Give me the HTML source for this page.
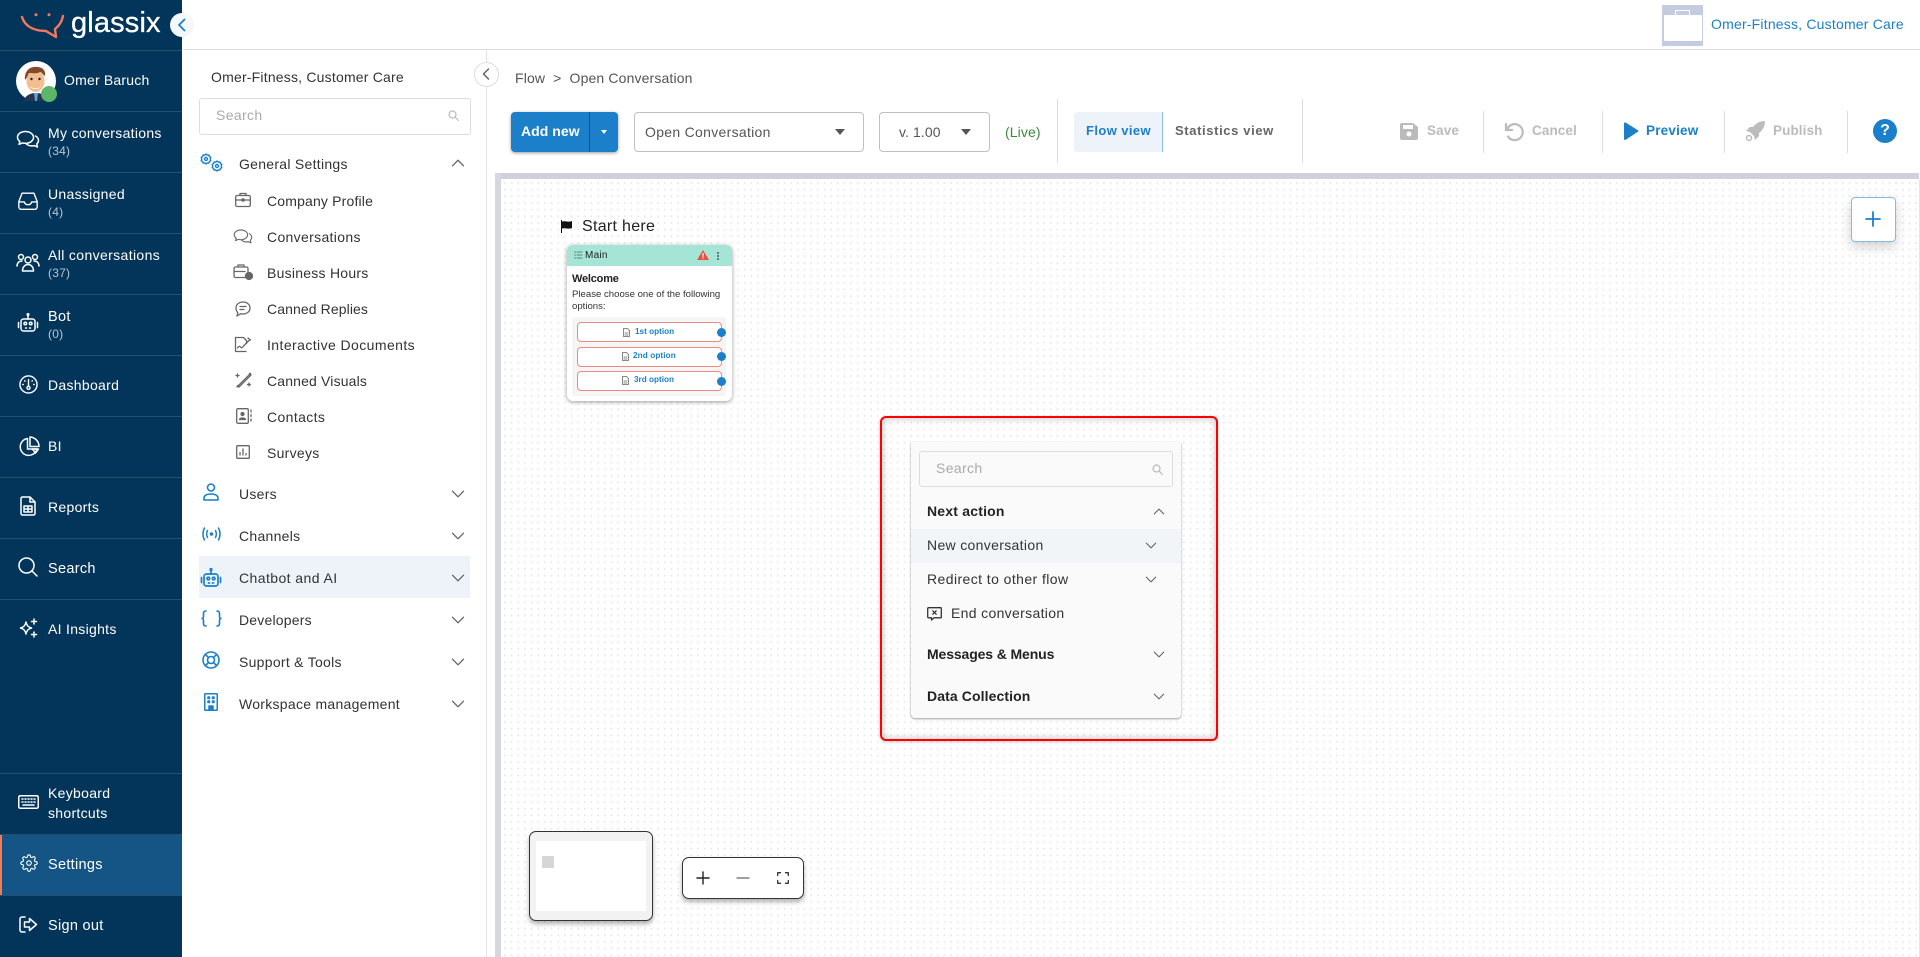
<!DOCTYPE html>
<html><head><meta charset="utf-8"><title>Flow</title>
<style>
html,body{margin:0;padding:0;background:#fff}
body{width:1920px;height:957px;position:relative;overflow:hidden;font-family:"Liberation Sans",sans-serif;color:#333}
.a,.t,svg.i,.c{position:absolute}
.t{white-space:nowrap;line-height:20px;font-size:14px;letter-spacing:.25px}
svg.i{fill:none;stroke:currentColor;stroke-width:1.5;stroke-linecap:round;stroke-linejoin:round;overflow:visible}
.w{color:#fff}
.n{color:#fff;font-size:14px;letter-spacing:.3px}
.cnt{color:#b9c6d1;font-size:12px;letter-spacing:.2px}
.hr{position:absolute;left:0;width:182px;height:1px;background:#24506f}
.s{font-size:14px;letter-spacing:.28px;color:#333}
.ic{color:#666}
.bl{color:#1b7fc9}
.v{position:absolute;width:1px;background:#ddd}
.ch{position:absolute;fill:none;stroke:#666;stroke-width:1.3;stroke-linecap:round;stroke-linejoin:round}
</style></head><body>

<svg width="0" height="0" style="position:absolute">
<symbol id="chat" viewBox="0 0 24 24"><path d="M9.500 3.500C5 3.500 1.500 6 1.500 9.300c0 1.700 1 3.200 2.400 4.300L3 16.300l3.600-1.400c.9.300 1.900.4 2.900.4 4.400 0 8-2.600 8-5.900s-3.600-5.900-8-5.900z"/><path d="M19.500 8c1.800 1 3 2.600 3 4.400 0 1.400-.7 2.600-1.700 3.500l.7 3.100-3.300-1.400c-.8.200-1.700.3-2.500.3-2.300 0-4.200-.8-5.400-2"/></symbol>
<symbol id="dn" viewBox="0 0 14 8"><path d="M1.500 1.200L7 6.800l5.500-5.600"/></symbol>
<symbol id="up" viewBox="0 0 14 8"><path d="M1.500 6.800L7 1.200l5.500 5.600"/></symbol>
<symbol id="bot" viewBox="0 0 24 24"><rect x="5" y="8" width="14" height="12" rx="2.500"/><path d="M12 8V4.500M2.500 11.500v5M21.500 11.500v5M9.500 17h1M13.500 17h1"/><circle cx="12" cy="3.500" r=".8"/><circle cx="9.300" cy="12.500" r="1.300"/><circle cx="14.700" cy="12.500" r="1.300"/></symbol>
</svg>

<!-- Left nav -->
<div class="a" style="left:0;top:0;width:182px;height:957px;background:#03355a"></div>
<div class="hr" style="top:50px"></div><div class="hr" style="top:111px"></div><div class="hr" style="top:172px"></div><div class="hr" style="top:233px"></div><div class="hr" style="top:294px"></div><div class="hr" style="top:355px"></div><div class="hr" style="top:416px"></div><div class="hr" style="top:477px"></div><div class="hr" style="top:538px"></div><div class="hr" style="top:599px"></div><div class="hr" style="top:773px"></div><div class="hr" style="top:834px"></div><div class="hr" style="top:895px"></div>
<div class="a" style="left:0;top:835px;width:182px;height:60px;background:#145586"></div>
<div class="a" style="left:0;top:835px;width:2px;height:60px;background:#f47b5a"></div>

<!-- logo -->
<svg class="a" style="left:0;top:0" width="70" height="45" viewBox="0 0 70 45"><path d="M22 17C25 27 35 31 46 31L56 37 55 29C59 26 62 21 63 16" fill="none" stroke="#f27a5b" stroke-width="2.400" stroke-linecap="round" stroke-linejoin="round"/><circle cx="36" cy="14.700" r="1.500" fill="#f27a5b"/><circle cx="49" cy="14.700" r="1.500" fill="#f27a5b"/></svg>
<div class="t" style="left:71px;top:5px;font-size:29px;line-height:36px;color:#fff;letter-spacing:.15px;-webkit-text-stroke:.3px #fff">glassix</div>
<div class="a" style="left:170px;top:13px;width:24px;height:24px;border-radius:50%;background:#f4f8fb"></div>
<svg class="i" style="left:177px;top:18px;color:#1b7fc9;stroke-width:1.800" width="10" height="14" viewBox="0 0 10 14"><path d="M7.500 1.500L2 7l5.500 5.500"/></svg>

<!-- avatar -->
<div class="a" style="left:16px;top:61px;width:40px;height:40px;border-radius:50%;background:#fff"></div>
<svg class="a" style="left:16px;top:61px" width="40" height="40" viewBox="0 0 40 40"><path d="M8 40c1-6 7-8 12-8s11 2 12 8z" fill="#27344f"/><path d="M18 32h4l-1 8h-2z" fill="#5ba6d9"/><ellipse cx="19.500" cy="20" rx="9" ry="11" fill="#f2bd90"/><path d="M9 19c-1-9 5-14 12-13 5 0 9 3 8 9-3-2-3-4-5-4-3 2-8 1-11 1-1 2-2 5-4 7z" fill="#84492a"/><path d="M14 25c2 3 9 3 11 0-1 4-10 4-11 0z" fill="#fff"/><circle cx="15.500" cy="18" r="1.200" fill="#222"/><circle cx="23.500" cy="18" r="1.200" fill="#222"/></svg>
<div class="a" style="left:41px;top:86px;width:16px;height:16px;border-radius:50%;background:#5cb868"></div>
<div class="t n" style="left:64px;top:70px;letter-spacing:.2px">Omer Baruch</div>

<!-- nav items -->
<svg class="i w" style="left:16px;top:128px" width="24" height="24"><use href="#chat"/></svg>
<div class="t n" style="left:48px;top:123px">My conversations</div><div class="t cnt" style="left:48px;top:141px">(34)</div>
<svg class="i w" style="left:17px;top:190px" width="22" height="22" viewBox="0 0 24 24"><path d="M5.500 3.500h13l3.500 9v6a2.500 2.500 0 0 1-2.500 2.500h-15A2.500 2.500 0 0 1 2 18.500v-6z"/><path d="M2.500 13H8c.5 2 2 3 4 3s3.500-1 4-3h5.500"/></svg>
<div class="t n" style="left:48px;top:184px">Unassigned</div><div class="t cnt" style="left:48px;top:202px">(4)</div>
<svg class="i w" style="left:16px;top:252px" width="24" height="22" viewBox="0 0 24 22"><circle cx="5" cy="5" r="2.500"/><circle cx="19" cy="5" r="2.500"/><circle cx="12" cy="8" r="3"/><path d="M1 14c0-3 2-5 5-5M23 14c0-3-2-5-5-5M6.500 19c0-4 2.500-6.500 5.500-6.500s5.500 2.500 5.500 6.500z"/></svg>
<div class="t n" style="left:48px;top:245px;letter-spacing:.37px">All conversations</div><div class="t cnt" style="left:48px;top:263px">(37)</div>
<svg class="i w" style="left:16px;top:311px" width="24" height="24"><use href="#bot"/></svg>
<div class="t n" style="left:48px;top:307px;font-size:14.500px">Bot</div><div class="t cnt" style="left:48px;top:324px">(0)</div>
<svg class="i w" style="left:18.500px;top:374.500px" width="19" height="19" viewBox="0 0 20 20"><circle cx="10" cy="10" r="9"/><circle cx="10" cy="13.500" r="1.600"/><path d="M10 11.500V5M4 10h.5M15.500 10h.5M6 6l.3.300M14 6l-.3.300"/></svg>
<div class="t n" style="left:48px;top:375px">Dashboard</div>
<svg class="i w" style="left:18.500px;top:436px" width="21" height="20" viewBox="0 0 21 20"><path d="M8.500 2.500a8.500 8.500 0 1 0 9.500 10.500h-9.500z"/><path d="M11 1v9.500h9A9.500 9.500 0 0 0 11 1zM13.500 13l3 4 3-4z"/></svg>
<div class="t n" style="left:48px;top:436px">BI</div>
<svg class="i w" style="left:20px;top:496px" width="16" height="20" viewBox="0 0 16 20"><path d="M1 2.500A1.500 1.500 0 0 1 2.500 1H10l5 5v11.500a1.500 1.500 0 0 1-1.500 1.500h-11A1.500 1.500 0 0 1 1 17.500z"/><path d="M10 1v5h5M4 10h8v6H4zM4 13h8M8 10v6"/></svg>
<div class="t n" style="left:48px;top:497px">Reports</div>
<svg class="i w" style="left:18px;top:557px" width="20" height="20" viewBox="0 0 20 20"><circle cx="8.500" cy="8.500" r="7.500"/><path d="M14 14l5 5"/></svg>
<div class="t n" style="left:48px;top:559px;font-size:14.500px">Search</div>
<svg class="i w" style="left:18px;top:618px" width="20" height="20" viewBox="0 0 20 20"><path d="M8 4c.8 3.500 2 5 5.500 6-3.500 1-4.700 2.500-5.500 6-.8-3.500-2-5-5.500-6C6 9 7.200 7.500 8 4zM16 1v5M13.500 3.500h5M16 14v5M13.500 16.500h5"/></svg>
<div class="t n" style="left:48px;top:619px">AI Insights</div>
<svg class="i w" style="left:18px;top:795px" width="21" height="14" viewBox="0 0 21 14"><rect x=".75" y=".75" width="19.500" height="12.500" rx="1.500"/><path d="M4 4h1M7 4h1M10 4h1M13 4h1M16 4h1M4 7h1M7 7h1M10 7h1M13 7h1M16 7h1M5 10h11"/></svg>
<div class="t n" style="left:48px;top:783px">Keyboard</div><div class="t n" style="left:48px;top:803px">shortcuts</div>
<svg class="i w" style="left:20px;top:854px" width="18" height="18" viewBox="0 0 24 24" stroke-width="2"><circle cx="12" cy="12" r="3"/><path d="M19.400 15a1.650 1.650 0 0 0 .33 1.820l.06.06a2 2 0 0 1 0 2.830 2 2 0 0 1-2.830 0l-.06-.06a1.650 1.650 0 0 0-1.820-.33 1.650 1.650 0 0 0-1 1.510V21a2 2 0 0 1-2 2 2 2 0 0 1-2-2v-.09A1.650 1.650 0 0 0 9 19.400a1.650 1.650 0 0 0-1.820.33l-.06.06a2 2 0 0 1-2.830 0 2 2 0 0 1 0-2.830l.06-.06a1.650 1.650 0 0 0 .33-1.820 1.650 1.650 0 0 0-1.510-1H3a2 2 0 0 1-2-2 2 2 0 0 1 2-2h.09A1.650 1.650 0 0 0 4.600 9a1.650 1.650 0 0 0-.33-1.820l-.06-.06a2 2 0 0 1 0-2.830 2 2 0 0 1 2.830 0l.06.06a1.650 1.650 0 0 0 1.820.33H9a1.650 1.650 0 0 0 1-1.510V3a2 2 0 0 1 2-2 2 2 0 0 1 2 2v.09a1.650 1.650 0 0 0 1 1.510 1.650 1.650 0 0 0 1.820-.33l.06-.06a2 2 0 0 1 2.830 0 2 2 0 0 1 0 2.830l-.06.06a1.650 1.650 0 0 0-.33 1.820V9a1.650 1.650 0 0 0 1.510 1H21a2 2 0 0 1 2 2 2 2 0 0 1-2 2h-.09a1.650 1.650 0 0 0-1.510 1z"/></svg>
<div class="t n" style="left:48px;top:855px;font-size:14.500px">Settings</div>
<svg class="i w" style="left:19px;top:916px" width="19" height="17" viewBox="0 0 19 17"><path d="M6 1H3a2 2 0 0 0-2 2v11a2 2 0 0 0 2 2h3"/><path d="M5.500 6h5V2.500l7 6-7 6V11h-5z"/></svg>
<div class="t n" style="left:48px;top:916px;font-size:14.500px">Sign out</div>

<!-- top header -->
<div class="a" style="left:183px;top:49px;width:1737px;height:1px;background:#ddd"></div>
<div class="a" style="left:1662px;top:5px;width:41px;height:41px;background:#c5cce2"></div>
<div class="a" style="left:1664px;top:15px;width:38px;height:26px;background:#fff;border-radius:1px"></div>
<div class="a" style="left:1675px;top:10px;width:15px;height:5px;border:1.500px solid #fff;border-bottom:0;box-sizing:border-box"></div>
<div class="t bl" style="left:1711px;top:14px;letter-spacing:.2px">Omer-Fitness, Customer Care</div>

<!-- settings panel -->
<div class="a" style="left:486px;top:50px;width:1px;height:907px;background:#e4e4e4"></div>
<div class="a" style="left:474px;top:62px;width:23px;height:23px;border-radius:50%;background:#fff;border:1px solid #ddd"></div>
<svg class="i" style="left:482px;top:68px;color:#666" width="8" height="12" viewBox="0 0 8 12"><path d="M6.500 1L1.500 6l5 5"/></svg>
<div class="t s" style="left:211px;top:67px;letter-spacing:.2px">Omer-Fitness, Customer Care</div>
<div class="a" style="left:199px;top:98px;width:270px;height:35px;border:1px solid #ddd;border-radius:3px"></div>
<div class="t" style="left:216px;top:105px;color:#aaa;letter-spacing:.35px">Search</div>
<svg class="i" style="left:448px;top:110px;color:#bbb;stroke-width:1.200" width="11" height="11" viewBox="0 0 11 11"><circle cx="4.500" cy="4.500" r="3.500"/><path d="M7.500 7.500l3 3"/></svg>

<svg class="i bl" style="left:200px;top:153px;stroke-width:1.400" width="23" height="20" viewBox="0 0 23 20"><circle cx="6" cy="6" r="1.500"/><path d="M6 1l1.200 1.100 1.700-.2.500 1.600 1.400.8-.6 1.700.6 1.700-1.400.8-.5 1.600-1.700-.2L6 11 4.800 9.900l-1.700.2-.5-1.600-1.400-.8.600-1.700-.6-1.700 1.400-.8.500-1.600 1.700.2z"/><circle cx="17" cy="13" r="1.500"/><path d="M17 8l1.200 1.100 1.700-.2.500 1.600 1.400.8-.6 1.700.6 1.700-1.400.8-.5 1.600-1.700-.2L17 18l-1.200-1.100-1.700.2-.5-1.600-1.400-.8.600-1.700-.6-1.700 1.400-.8.500-1.600 1.700.2z"/></svg>
<div class="t s" style="left:239px;top:154px">General Settings</div>
<svg class="ch" style="left:451px;top:159px" width="14" height="8"><use href="#up"/></svg>

<svg class="i ic" style="left:235px;top:192px;stroke-width:1.300" width="16" height="16" viewBox="0 0 16 16"><rect x=".7" y="3.500" width="14.600" height="11" rx="1.500"/><path d="M5 3.500V1.500h6v2M.7 8h14.600M7 7h2v2H7z"/></svg>
<div class="t s" style="left:267px;top:191px;letter-spacing:.17px">Company Profile</div>
<svg class="i ic" style="left:233px;top:227px;stroke-width:1.300" width="20" height="20"><use href="#chat"/></svg>
<div class="t s" style="left:267px;top:227px;letter-spacing:.33px">Conversations</div>
<svg class="i ic" style="left:233px;top:264px;stroke-width:1.300" width="20" height="16" viewBox="0 0 20 16"><path d="M12 13.500H2.500A1.500 1.500 0 0 1 1 12V4.500A1.500 1.500 0 0 1 2.500 3h11A1.500 1.500 0 0 1 15 4.500V8M5 3V1h6v2M1 7.500h11"/><circle cx="16" cy="12" r="3.500" fill="#666"/></svg>
<div class="t s" style="left:267px;top:263px;letter-spacing:.25px">Business Hours</div>
<svg class="i ic" style="left:235px;top:301px;stroke-width:1.300" width="16" height="16" viewBox="0 0 16 16"><path d="M8 1c4 0 7 2.500 7 6s-3 6-7 6c-.8 0-1.500-.1-2.200-.3L2 15l.8-3.400C1.600 10.500 1 8.900 1 7c0-3.500 3-6 7-6z"/><path d="M5 5.500h6M5 8.500h4"/></svg>
<div class="t s" style="left:267px;top:299px;letter-spacing:.1px">Canned Replies</div>
<svg class="i ic" style="left:234px;top:336px;stroke-width:1.300" width="18" height="17" viewBox="0 0 18 17"><path d="M12 15.500H1.500V1.500h8l3 3v3"/><path d="M3.500 12c1-2 2-2 3-1 1 1 2 1 3-1l6-6M14 2l2.500 2"/></svg>
<div class="t s" style="left:267px;top:335px;letter-spacing:.42px">Interactive Documents</div>
<svg class="i ic" style="left:235px;top:372px;stroke-width:1.300" width="17" height="16" viewBox="0 0 17 16"><path d="M2 15L15.500 1.500M1 3.500h3M2.500 2v3M12.500 12.500h3M14 11v3"/><path d="M2.500 13.500l1.500 1.500L16 3l-1.500-1.500"/></svg>
<div class="t s" style="left:267px;top:371px;letter-spacing:.16px">Canned Visuals</div>
<svg class="i ic" style="left:236px;top:408px;stroke-width:1.300" width="16" height="16" viewBox="0 0 16 16"><rect x=".7" y=".7" width="11.600" height="14.600" rx="1.200"/><circle cx="6.500" cy="6" r="1.500" fill="#666"/><path d="M3.500 11.500c.5-2 5.500-2 6 0z" fill="#666"/><path d="M15 2v2M15 6.500v2M15 11v2"/></svg>
<div class="t s" style="left:267px;top:407px;letter-spacing:.38px">Contacts</div>
<svg class="i ic" style="left:236px;top:445px;stroke-width:1.300" width="14" height="14" viewBox="0 0 14 14"><rect x=".7" y=".7" width="12.600" height="12.600" rx=".8"/><path d="M4 10V7.500M7 10V4M10 10V8.500"/></svg>
<div class="t s" style="left:267px;top:443px">Surveys</div>

<svg class="i bl" style="left:203px;top:483px;stroke-width:1.600" width="16" height="18" viewBox="0 0 16 18"><circle cx="8" cy="4.500" r="3.500"/><path d="M1 17v-2c0-2 2-4 7-4s7 2 7 4v2z"/></svg>
<div class="t s" style="left:239px;top:484px">Users</div><svg class="ch" style="left:451px;top:490px" width="14" height="8"><use href="#dn"/></svg>
<svg class="i bl" style="left:201px;top:527px;stroke-width:1.500" width="21" height="14" viewBox="0 0 21 14"><path d="M3.500 1C1.500 4.500 1.500 9.500 3.500 13M6.500 3.500C5.500 5.500 5.500 8.500 6.500 10.500M17.500 1c2 3.500 2 8.500 0 12M14.500 3.500c1 2 1 5 0 7"/><circle cx="10.500" cy="7" r="1" fill="currentColor"/></svg>
<div class="t s" style="left:239px;top:526px">Channels</div><svg class="ch" style="left:451px;top:532px" width="14" height="8"><use href="#dn"/></svg>
<div class="a" style="left:199px;top:556px;width:271px;height:42px;background:#edf3f9"></div>
<svg class="i bl" style="left:199px;top:566px;stroke-width:1.700" width="24" height="24"><use href="#bot"/></svg>
<div class="t s" style="left:239px;top:568px;letter-spacing:.42px">Chatbot and AI</div><svg class="ch" style="left:451px;top:574px" width="14" height="8"><use href="#dn"/></svg>
<svg class="i bl" style="left:201px;top:610px;stroke-width:1.600" width="21" height="17" viewBox="0 0 21 17"><path d="M5 1C3 1 2.500 2 2.500 3.500v3C2.500 7.500 2 8.500 1 8.500c1 0 1.500 1 1.500 2v3c0 1.500.5 2.500 2.500 2.500M16 1c2 0 2.500 1 2.500 2.500v3c0 1 .5 2 1.500 2-1 0-1.500 1-1.500 2v3c0 1.500-.5 2.500-2.500 2.500"/></svg>
<div class="t s" style="left:239px;top:610px;letter-spacing:.2px">Developers</div><svg class="ch" style="left:451px;top:616px" width="14" height="8"><use href="#dn"/></svg>
<svg class="i bl" style="left:202px;top:651px;stroke-width:1.600" width="18" height="18" viewBox="0 0 18 18"><circle cx="9" cy="9" r="8"/><circle cx="9" cy="9" r="3.500"/><path d="M3.400 3.400L6.500 6.500M14.600 3.400L11.500 6.500M3.400 14.600l3.100-3.100M14.600 14.600l-3.100-3.100"/></svg>
<div class="t s" style="left:239px;top:652px">Support &amp; Tools</div><svg class="ch" style="left:451px;top:658px" width="14" height="8"><use href="#dn"/></svg>
<svg class="i bl" style="left:204px;top:693px;stroke-width:1.500" width="14" height="18" viewBox="0 0 14 18"><rect x=".75" y=".75" width="12.500" height="16.500" rx=".8"/><path d="M4 4h1.500v1.500H4zM8.500 4H10v1.500H8.500zM4 8h1.500v1.500H4zM8.500 8H10v1.500H8.500zM5 17v-4h4v4" fill="currentColor"/></svg>
<div class="t s" style="left:239px;top:694px">Workspace management</div><svg class="ch" style="left:451px;top:700px" width="14" height="8"><use href="#dn"/></svg>

<!-- toolbar -->
<div class="t" style="left:515px;top:68px;color:#555;letter-spacing:.14px">Flow &nbsp;&gt;&nbsp; Open Conversation</div>
<div class="a" style="left:511px;top:112px;width:107px;height:40px;background:#1b7fc9;border-radius:4px;box-shadow:0 1px 3px rgba(0,0,0,.4)"></div>
<div class="a" style="left:589px;top:112px;width:1px;height:40px;background:#0c4f82"></div>
<div class="t" style="left:521px;top:121px;color:#fff;font-weight:bold;letter-spacing:.05px">Add new</div>
<div class="a" style="left:601px;top:130px;border-left:3.500px solid transparent;border-right:3.500px solid transparent;border-top:4px solid #fff"></div>
<div class="a" style="left:634px;top:112px;width:228px;height:38px;border:1px solid #c0c0c0;border-radius:4px"></div>
<div class="t" style="left:645px;top:122px;color:#555;letter-spacing:.3px">Open Conversation</div>
<div class="a" style="left:835px;top:129px;border-left:5px solid transparent;border-right:5px solid transparent;border-top:6px solid #555"></div>
<div class="a" style="left:879px;top:112px;width:109px;height:38px;border:1px solid #c0c0c0;border-radius:4px"></div>
<div class="t" style="left:899px;top:122px;color:#555;letter-spacing:.1px">v. 1.00</div>
<div class="a" style="left:961px;top:129px;border-left:5px solid transparent;border-right:5px solid transparent;border-top:6px solid #555"></div>
<div class="t" style="left:1005px;top:122px;color:#3c8a3c;letter-spacing:.1px">(Live)</div>
<div class="v" style="left:1057px;top:99px;height:64px"></div>
<div class="a" style="left:1074px;top:112px;width:88px;height:40px;background:#edf3f9;border-right:1px solid #8cc0e6;border-radius:3px 0 0 3px"></div>
<div class="t bl" style="left:1086px;top:121px;font-weight:bold;font-size:13px;letter-spacing:.4px">Flow view</div>
<div class="t" style="left:1175px;top:121px;font-weight:bold;font-size:13px;color:#666;letter-spacing:.62px">Statistics view</div>
<div class="v" style="left:1302px;top:99px;height:64px"></div>

<svg class="a" style="left:1400px;top:123px" width="18" height="17" viewBox="0 0 18 17"><path d="M2 0h11l5 4v11a2 2 0 0 1-2 2H2a2 2 0 0 1-2-2V2a2 2 0 0 1 2-2z" fill="#bbb"/><rect x="3" y="2" width="10" height="4" fill="#fff"/><circle cx="9" cy="11" r="2.500" fill="#fff"/></svg>
<div class="t" style="left:1427px;top:121px;color:#bbb;font-size:13.500px;font-weight:bold;letter-spacing:.1px">Save</div>
<div class="v" style="left:1483px;top:111px;height:42px"></div>
<svg class="i" style="left:1504px;top:122px;color:#bbb;stroke-width:2.200" width="19" height="19" viewBox="0 0 19 19"><path d="M3 8a8 8 0 1 1 1 6.500"/><path d="M2 2v6h6" stroke-linejoin="miter"/></svg>
<div class="t" style="left:1532px;top:121px;color:#bbb;font-size:13.500px;font-weight:bold;letter-spacing:.1px">Cancel</div>
<div class="v" style="left:1602px;top:111px;height:42px"></div>
<svg class="a" style="left:1623px;top:122px" width="16" height="19" viewBox="0 0 16 19"><path d="M1 1.500c0-1 .8-1.400 1.700-.9l12 7.500c.8.500.8 1.300 0 1.800l-12 7.900c-.9.500-1.700.100-1.700-.9z" fill="#1b7fc9"/></svg>
<div class="t bl" style="left:1646px;top:121px;font-size:13.500px;font-weight:bold;letter-spacing:.2px">Preview</div>
<div class="v" style="left:1724px;top:111px;height:42px"></div>
<svg class="a" style="left:1745px;top:121px" width="20" height="21" viewBox="0 0 20 21"><path d="M20 0c-5 0-9 2-12 6L5 6 1 10l4 1 4 4 1 4 4-4v-3c4-3 6-7 6-12z" fill="#bbb"/><circle cx="4" cy="17" r="2.500" fill="none" stroke="#bbb" stroke-width="1.500"/></svg>
<div class="t" style="left:1773px;top:121px;color:#bbb;font-size:13.500px;font-weight:bold;letter-spacing:.1px">Publish</div>
<div class="v" style="left:1847px;top:111px;height:42px"></div>
<div class="a" style="left:1873px;top:119px;width:24px;height:24px;border-radius:50%;background:#1b7fc9;color:#fff;font-weight:bold;font-size:16px;line-height:24px;text-align:center">?</div>

<!-- canvas -->
<div class="a" style="left:495px;top:173px;width:1425px;height:784px;background-color:#fff;background-image:radial-gradient(circle at 50% 50%,#e6e6e6 .7px,transparent 1.100px);background-size:6.67px 6.67px"></div>
<div class="a" style="left:495px;top:173px;width:1424px;height:6px;background:#cfd2da"></div>
<div class="a" style="left:495px;top:173px;width:6px;height:784px;background:#d5d8de"></div>
<div class="a" style="left:1919px;top:179px;width:1px;height:778px;background:#e5e5e5"></div>
<div class="a" style="left:1851px;top:197px;width:43px;height:43px;background:#fff;border:1px solid #86bce4;border-radius:4px;box-shadow:0 5px 12px rgba(0,0,0,.18)"></div>
<svg class="i bl" style="left:1866px;top:212px;stroke-width:1.800" width="14" height="14" viewBox="0 0 14 14"><path d="M7 0v14M0 7h14"/></svg>

<svg class="a" style="left:560px;top:220px" width="13" height="13" viewBox="0 0 13 13"><path d="M1 0h1v1.500c3-1 7 1 10-.5v7c-3 1.500-7-.5-10 .5V13H1z" fill="#111"/></svg>
<div class="t" style="left:582px;top:217px;font-size:16px;color:#222;letter-spacing:.3px">Start here</div>

<!-- card -->
<div class="a" style="left:567px;top:245px;width:165px;height:156px;background:#fff;border-radius:6px;box-shadow:0 1px 4px rgba(0,0,0,.4)"></div>
<div class="a" style="left:567px;top:245px;width:165px;height:21px;background:#a5e5d5;border-radius:6px 6px 0 0"></div>
<svg class="i" style="left:574px;top:251px;color:#5e7f78;stroke-width:1" width="8" height="8" viewBox="0 0 8 8"><path d="M3 1h5M3 4h5M3 7h5M.5 1h1M.5 4h1M.5 7h1"/></svg>
<div class="t" style="left:585px;top:246px;font-size:10px;color:#222;letter-spacing:.25px">Main</div>
<svg class="a" style="left:697px;top:250px" width="12" height="10" viewBox="0 0 12 10"><path d="M6 0l6 10H0z" fill="#e8503f"/><path d="M5.400 3h1.200v3.700H5.400zM5.400 7.500h1.200v1.200H5.400z" fill="#fff"/></svg>
<div class="a" style="left:717px;top:252px;width:2px;height:2px;border-radius:50%;background:#555;box-shadow:0 3px 0 #555,0 6px 0 #555"></div>
<div class="t" style="left:572px;top:269px;font-size:11px;font-weight:bold;color:#222;letter-spacing:-.2px">Welcome</div>
<div class="t" style="left:572px;top:285px;font-size:9.600px;color:#333;letter-spacing:0">Please choose one of the following</div>
<div class="t" style="left:572px;top:297px;font-size:9.600px;color:#333;letter-spacing:0">options:</div>
<div class="a" style="left:572px;top:317px;width:154px;height:79px;background:#f5f5f5;border-radius:3px"></div>
<div class="a" style="left:577px;top:322px;width:143px;height:18px;background:#fff;border:1px solid #f08a80;border-radius:4px"></div>
<div class="a" style="left:577px;top:347px;width:143px;height:18px;background:#fff;border:1px solid #f08a80;border-radius:4px"></div>
<div class="a" style="left:577px;top:371px;width:143px;height:18px;background:#fff;border:1px solid #f08a80;border-radius:4px"></div>
<svg class="i" style="left:623px;top:328px;color:#888;stroke-width:1" width="7" height="9" viewBox="0 0 7 9"><path d="M.5.500h4l2 2v6H.500zM2 5h3M2 7h3"/></svg>
<svg class="i" style="left:622px;top:352px;color:#888;stroke-width:1" width="7" height="9" viewBox="0 0 7 9"><path d="M.5.500h4l2 2v6H.500zM2 5h3M2 7h3"/></svg>
<svg class="i" style="left:622px;top:376px;color:#888;stroke-width:1" width="7" height="9" viewBox="0 0 7 9"><path d="M.5.500h4l2 2v6H.500zM2 5h3M2 7h3"/></svg>
<div class="t bl" style="left:635px;top:322px;font-size:8.200px;font-weight:bold;letter-spacing:0">1st option</div>
<div class="t bl" style="left:633px;top:346px;font-size:8.200px;font-weight:bold;letter-spacing:.1px">2nd option</div>
<div class="t bl" style="left:634px;top:370px;font-size:8.200px;font-weight:bold;letter-spacing:0">3rd option</div>
<div class="a" style="left:717px;top:328px;width:9px;height:9px;border-radius:50%;background:#1b7fc9"></div>
<div class="a" style="left:717px;top:352px;width:9px;height:9px;border-radius:50%;background:#1b7fc9"></div>
<div class="a" style="left:717px;top:377px;width:9px;height:9px;border-radius:50%;background:#1b7fc9"></div>

<!-- red highlight + menu -->
<div class="a" style="left:880px;top:416px;width:334px;height:321px;border:2px solid #f00;border-radius:6px;box-shadow:inset 0 0 8px rgba(0,0,0,.25),0 1px 3px rgba(0,0,0,.2)"></div>
<div class="a" style="left:911px;top:442px;width:270px;height:276px;background:#fafafa;border-radius:0 0 4px 4px;box-shadow:0 1px 2px rgba(0,0,0,.4)"></div>
<div class="a" style="left:919px;top:451px;width:252px;height:34px;border:1px solid #ddd;border-radius:3px"></div>
<div class="t" style="left:936px;top:458px;color:#aaa;letter-spacing:.35px">Search</div>
<svg class="i" style="left:1152px;top:464px;color:#bbb;stroke-width:1.200" width="11" height="11" viewBox="0 0 11 11"><circle cx="4.500" cy="4.500" r="3.500"/><path d="M7.500 7.500l3 3"/></svg>
<div class="t" style="left:927px;top:501px;font-weight:bold;color:#222;letter-spacing:.2px">Next action</div>
<svg class="ch" style="left:1153px;top:508px" width="12" height="7" viewBox="0 0 14 8"><use href="#up"/></svg>
<div class="a" style="left:911px;top:529px;width:270px;height:34px;background:#f1f5f8"></div>
<div class="t" style="left:927px;top:535px;letter-spacing:.33px">New conversation</div>
<svg class="ch" style="left:1145px;top:542px" width="12" height="7" viewBox="0 0 14 8"><use href="#dn"/></svg>
<div class="t" style="left:927px;top:569px;letter-spacing:.42px">Redirect to other flow</div>
<svg class="ch" style="left:1145px;top:576px" width="12" height="7" viewBox="0 0 14 8"><use href="#dn"/></svg>
<svg class="i" style="left:927px;top:607px;color:#333;stroke-width:1.300" width="15" height="14" viewBox="0 0 15 14"><path d="M1.500.7h12a.8.800 0 0 1 .8.800v8.500a.8.800 0 0 1-.8.800H7L4.500 13v-2.200h-3a.8.800 0 0 1-.8-.8V1.500a.8.800 0 0 1 .8-.8zM5.800 3.800l3.400 3.400M9.200 3.800L5.800 7.200"/></svg>
<div class="t" style="left:951px;top:603px;letter-spacing:.33px">End conversation</div>
<div class="t" style="left:927px;top:644px;font-weight:bold;color:#222;letter-spacing:-.12px">Messages &amp; Menus</div>
<svg class="ch" style="left:1153px;top:651px" width="12" height="7" viewBox="0 0 14 8"><use href="#dn"/></svg>
<div class="t" style="left:927px;top:686px;font-weight:bold;color:#222;letter-spacing:.1px">Data Collection</div>
<svg class="ch" style="left:1153px;top:693px" width="12" height="7" viewBox="0 0 14 8"><use href="#dn"/></svg>

<!-- minimap + controls -->
<div class="a" style="left:529px;top:831px;width:122px;height:88px;background:#f2f2f2;border:1px solid #333;border-radius:7px;box-shadow:0 3px 5px rgba(0,0,0,.3)"></div>
<div class="a" style="left:536px;top:841px;width:110px;height:70px;background:#fff"></div>
<div class="a" style="left:542px;top:856px;width:12px;height:12px;background:#d6d6d6"></div>
<div class="a" style="left:682px;top:857px;width:120px;height:40px;background:#fff;border:1px solid #333;border-radius:7px;box-shadow:0 3px 5px rgba(0,0,0,.3)"></div>
<svg class="i" style="left:697px;top:872px;color:#222;stroke-width:1.400" width="12" height="12" viewBox="0 0 12 12"><path d="M6 0v12M0 6h12"/></svg>
<svg class="i" style="left:737px;top:872px;color:#666;stroke-width:1.200" width="12" height="12" viewBox="0 0 12 12"><path d="M0 6h12"/></svg>
<svg class="i" style="left:777px;top:872px;color:#333;stroke-width:1.300" width="12" height="12" viewBox="0 0 12 12"><path d="M.7 3.500V.7h2.800M8.500.7h2.800v2.800M.7 8.500v2.800h2.800M8.500 11.300h2.800V8.500"/></svg>
</body></html>
